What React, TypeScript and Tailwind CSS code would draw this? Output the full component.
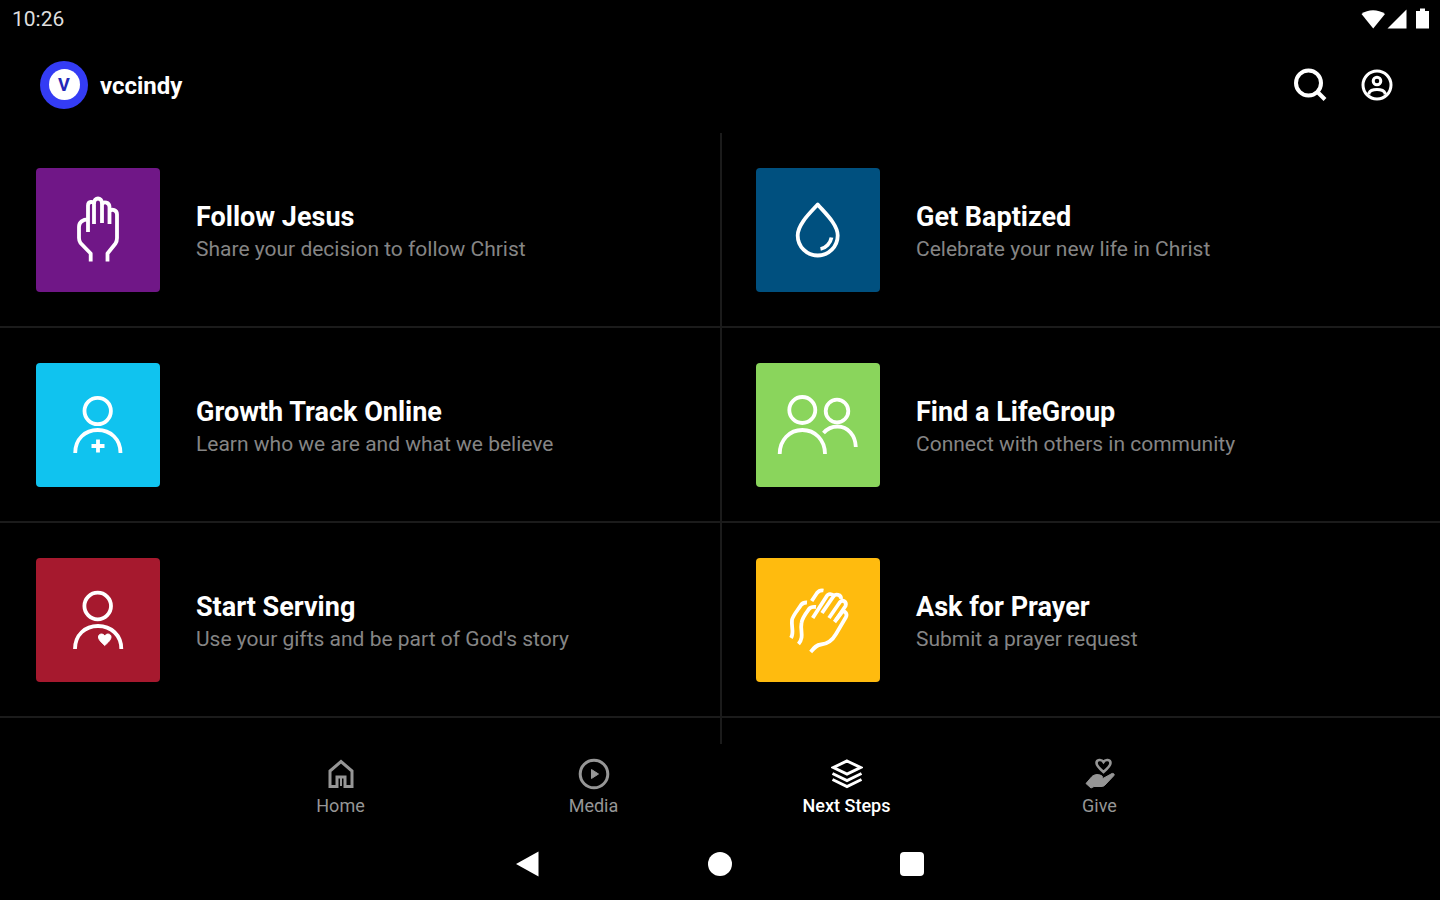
import type { ReactNode } from 'react'

interface Step {
  title: string
  description: string
  color: string
  icon: ReactNode
}

interface Tab {
  label: string
  active?: boolean
  icon: ReactNode
}

const steps: Step[] = [
  {
    title: 'Follow Jesus',
    description: 'Share your decision to follow Christ',
    color: 'bg-[#701787]',
    icon: (
      <>
        <path d="M54.7 93.5V85.5L44.5 75C43.5 73.5 43 72.5 43 70V59C43 54 47 51.5 52 51.5" />
        <path d="M52 64V37.5C52 33 58 33 58 36.5V56" />
        <path d="M58 36V35C58 29 66 29 66 35V55" />
        <path d="M66 36.5C67.5 33 73.5 34 73.5 39V56" />
        <path d="M73.5 43C76 40.5 81 42 81 46.5V70C81 72.5 80.5 74 79.5 75.5L71.5 85.5V93.5" />
      </>
    ),
  },
  {
    title: 'Get Baptized',
    description: 'Celebrate your new life in Christ',
    color: 'bg-[#00507f]',
    icon: (
      <>
        <path d="M61.7 36.5C55 44 41.7 56 41.7 67.5a20 20 0 0 0 40 0C81.7 56 68 44 61.7 36.5z" />
        <path d="M75.5 69.5C74.5 75 70 80 64.5 81" />
      </>
    ),
  },
  {
    title: 'Growth Track Online',
    description: 'Learn who we are and what we believe',
    color: 'bg-[#10c3ef]',
    icon: (
      <>
        <circle cx="61.7" cy="48" r="13.2" />
        <path d="M39.2 90C39.2 76 49 67 61.7 67S84.5 76 84.5 90" />
        <path d="M62 76.5v13M55.5 83h13" />
      </>
    ),
  },
  {
    title: 'Find a LifeGroup',
    description: 'Connect with others in community',
    color: 'bg-[#8ad55c]',
    icon: (
      <>
        <circle cx="46.3" cy="47" r="13" />
        <circle cx="81" cy="48" r="11.3" />
        <path d="M23.7 91C23.7 77 33.5 67 46.3 67S69 77 69 91" />
        <path d="M67.5 70C71 66 76 63.500 81.5 63.500C92 63.500 99.5 72.500 99.8 84" />
      </>
    ),
  },
  {
    title: 'Start Serving',
    description: "Use your gifts and be part of God's story",
    color: 'bg-[#a6192e]',
    icon: (
      <>
        <circle cx="61.7" cy="48" r="13.3" />
        <path d="M39 91C39 77 49 68 62 68S85.3 77 85.3 91" />
        <path
          d="M68.7 87.5C66 85 62.500 82 62.500 79C62.500 75.500 67 75 68.700 78C70.500 75 75 75.500 75 79C75 82 71.500 85 68.700 87.500z"
          fill="currentColor"
          strokeWidth="1"
        />
      </>
    ),
  },
  {
    title: 'Ask for Prayer',
    description: 'Submit a prayer request',
    color: 'bg-[#ffbb0e]',
    icon: (
      <>
        <path d="M35 80C38.5 74 35 69 36 62C37 57 42 52 45 47C46.5 45 48 44.3 51 44.5" />
        <path d="M42.5 86C48.5 79 44 73 45.5 65C46 60 50 55 53 51C54.5 49 57 48.7 60 49" />
        <path d="M55.7 43L61 35C62.5 33 64.5 32 67.5 32.5" />
        <path d="M56.7 60L70.5 38.5C72 35.5 76 35.5 78 38" />
        <path d="M66 55L77 39C79.5 35 85.5 36.5 85 41" />
        <path d="M73 60L84 44C87 41 91 44 89.5 48L80 62" />
        <path d="M78.5 64L86 54C89 52 91.5 56 90 59L80 76C76 83 71 86 65 86.5C60 87 58 90 54.7 94" />
      </>
    ),
  },
]

const tabs: Tab[] = [
  {
    label: 'Home',
    icon: (
      <>
        <path d="M5 28.5V13L16 3.500L27 13V28.500H20V19H12V28.500z" />
        <path d="M16 20v8" strokeWidth="2" />
      </>
    ),
  },
  {
    label: 'Media',
    icon: (
      <>
        <circle cx="16" cy="16" r="13.8" />
        <path d="M13.5 11.5L20.5 16L13.5 20.5z" fill="currentColor" strokeWidth="1" />
      </>
    ),
  },
  {
    label: 'Next Steps',
    active: true,
    icon: (
      <>
        <path d="M16 3L29.5 9.5L16 16L2.500 9.500z" />
        <path d="M1.500 15.500L16 22.500L30.500 15.500" />
        <path d="M1.500 21.500L16 28.500L30.500 21.500" />
      </>
    ),
  },
  {
    label: 'Give',
    icon: (
      <>
        <path
          d="M19.5 14C16 11 12.5 8 12.5 5C12.5 1.5 17.5 1 19.5 4C21.5 1 26.5 1.5 26.5 5C26.5 8 23 11 19.5 14z"
          strokeWidth="2.6"
        />
        <path
          d="M2 25.5L8 18.5C11 16 15 16 18 18C19 19 18.5 20 18 21L28 15.5C30 15 31 16.5 29.5 18L21 27C20 28 19 28.5 17 28.5H10L7 30z"
          fill="currentColor"
          strokeWidth="1"
        />
      </>
    ),
  },
]

function StatusBar() {
  return (
    <div className="flex h-10 items-center justify-between pl-3 pr-2 text-[#dedede]">
      <span className="text-[21px]">10:26</span>
      <svg className="h-6 w-[72px]" viewBox="0 0 72 24" fill="white" aria-hidden="true">
        <path d="M1.5 6C8 1 18 1 25 6L13.2 20.5z" />
        <path d="M46.5 1.5V20.5H27.5z" />
        <path d="M56 3H60V0.5H65V3H69V20.5H56z" />
      </svg>
    </div>
  )
}

function Header() {
  return (
    <header className="flex h-[93px] items-center justify-between pb-1 pl-10 pr-[45px]">
      <div className="flex items-center gap-3">
        <span className="flex size-12 items-center justify-center rounded-full bg-[#343cf4]">
          <span className="flex size-[31px] items-center justify-center rounded-full bg-white text-lg font-bold text-[#2428b8]">
            V
          </span>
        </span>
        <h1 className="pt-0.5 text-2xl font-bold">vccindy</h1>
      </div>
      <div className="flex items-center gap-[30px]">
        <button type="button" aria-label="Search">
          <svg className="size-9" viewBox="0 0 36 36" fill="none" stroke="currentColor" strokeWidth="4">
            <circle cx="15.5" cy="16" r="12.5" />
            <path d="M24.500 25L32 32.500" />
          </svg>
        </button>
        <button type="button" aria-label="Account">
          <svg className="size-9" viewBox="0 0 36 36" fill="none" stroke="currentColor" strokeWidth="3">
            <circle cx="18" cy="18" r="14" />
            <circle cx="18" cy="14" r="3.8" />
            <path d="M10 27.500V26C11 23.500 14 22.500 18 22.500S25 23.500 26 26V27.500" />
          </svg>
        </button>
      </div>
    </header>
  )
}

function StepList({ items, divided }: { items: Step[]; divided?: boolean }) {
  return (
    <ul className={divided ? 'border-l-2 border-[#1b1b1b]' : ''}>
      {items.map((step) => (
        <li key={step.title} className="border-b-2 border-[#1b1b1b]">
          <a
            href="#"
            className={`flex items-center gap-9 pb-[34px] pr-9 pt-[35px] ${divided ? 'pl-[34px]' : 'pl-9'}`}
          >
            <span className={`size-[124px] shrink-0 rounded ${step.color}`}>
              <svg
                className="size-full"
                viewBox="0 0 124 124"
                fill="none"
                stroke="currentColor"
                strokeWidth="3.8"
                strokeLinejoin="round"
                aria-hidden="true"
              >
                {step.icon}
              </svg>
            </span>
            <span className="flex flex-col pt-1.5">
              <span className="text-[27px] font-bold leading-8">{step.title}</span>
              <span className="text-[21px] leading-8 text-[#858585]">{step.description}</span>
            </span>
          </a>
        </li>
      ))}
    </ul>
  )
}

function TabBar() {
  return (
    <nav className="mx-auto grid w-full max-w-[1012px] grid-cols-4 pb-2.5 pt-3.5">
      {tabs.map((tab) => (
        <a
          key={tab.label}
          href="#"
          aria-current={tab.active ? 'page' : undefined}
          className={`flex flex-col items-center gap-1 ${tab.active ? 'font-medium text-white' : 'text-[#969696]'}`}
        >
          <svg
            className="size-8"
            viewBox="0 0 32 32"
            fill="none"
            stroke="currentColor"
            strokeWidth="3"
            aria-hidden="true"
          >
            {tab.icon}
          </svg>
          <span className="text-lg leading-6">{tab.label}</span>
        </a>
      ))}
    </nav>
  )
}

function SystemBar() {
  return (
    <div className="flex h-[72px] items-center justify-center">
      <button type="button" aria-label="Back" className="flex w-48 justify-center">
        <svg className="size-7" viewBox="0 0 28 28" fill="currentColor">
          <path d="M2 14L24.5 1.5V26.5z" />
        </svg>
      </button>
      <button type="button" aria-label="Home screen" className="flex w-48 justify-center">
        <span className="size-6 rounded-full bg-white" />
      </button>
      <button type="button" aria-label="Recent apps" className="flex w-48 justify-center">
        <span className="size-6 rounded-sm bg-white" />
      </button>
    </div>
  )
}

export default function App() {
  return (
    <div className="flex min-h-screen flex-col bg-black font-['Roboto',sans-serif] text-white">
      <StatusBar />
      <Header />
      <main className="grid flex-1 grid-cols-2">
        <StepList items={steps.filter((_, i) => i % 2 === 0)} />
        <StepList items={steps.filter((_, i) => i % 2 === 1)} divided />
      </main>
      <TabBar />
      <SystemBar />
    </div>
  )
}
